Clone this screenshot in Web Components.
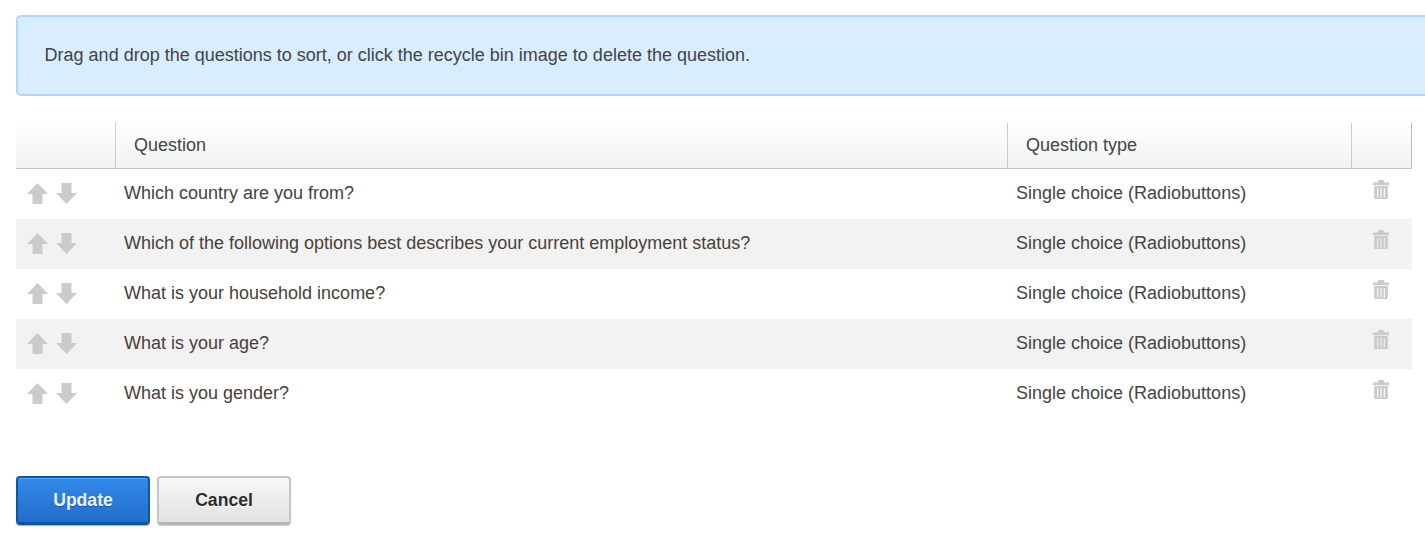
<!DOCTYPE html>
<html><head><meta charset="utf-8"><title>Sort questions</title>
<style>
html,body{margin:0;padding:0;background:#fff;overflow:hidden;height:553px}
body{font-family:"Liberation Sans",Arial,sans-serif;color:#444}
</style></head><body>
<template id="t-page"><style>
:host{display:block;padding:15px 0 0 16px;width:1396px}
.acts{display:flex;gap:7px;margin-top:57px}
</style>
<slot name="alert"></slot><slot name="table"></slot><div class="acts"><slot name="actions"></slot></div></template>
<template id="t-alert"><style>
:host{display:flex;align-items:center;box-sizing:border-box;width:1440px;height:81px;padding:0 26.6px 1px;background:#d8edff;border:2px solid #aed8ff;border-radius:5px;font-size:18px;color:#444}
</style><slot></slot></template>
<template id="t-table"><style>
:host{display:block;margin-top:27px}
</style><slot></slot></template>
<template id="t-head"><style>
:host{display:grid;grid-template-columns:99px 892px 344px 61px;height:46px;box-sizing:border-box;border-bottom:1px solid #c4c4c4;background:linear-gradient(#fff,#f1f2f2);font-size:18px}
div{box-sizing:border-box;border-left:1px solid #ccc;padding:0 18px;display:flex;align-items:center;height:45px}
div.first{border-left:0}
div.last{border-right:1px solid #bbb}
</style><div class="first"></div><div><slot name="q"></slot></div><div><slot name="t"></slot></div><div class="last"></div></template>
<template id="t-row"><style>
:host{display:grid;grid-template-columns:100px 892px 344px 60px;height:50px;align-items:center;font-size:18px;background:#fff;color:#4a4038}
:host([alt]){background:#f2f2f2}
.mv{display:flex;gap:8px;padding:0 0 1px 10.5px;align-items:center;height:100%;box-sizing:border-box}
.q{padding-left:8px;margin-top:-2px}
.t{padding-left:8px;color:#444;margin-top:-2px}
.d{display:flex;justify-content:flex-start;padding-left:21px;margin-top:-9px}
svg{display:block;fill:#cbcbcb;filter:blur(.45px)}
</style>
<div class="mv"><svg width="21" height="21" viewBox="0 0 21 21"><path d="M10.5 0 L21 11 H15.5 V21 H5.5 V11 H0Z"/></svg><svg width="21" height="21" viewBox="0 0 21 21"><path d="M5.5 0 H15.5 V10 H21 L10.5 21 L0 10 H5.5Z"/></svg></div>
<div class="q"><slot name="q"></slot></div><div class="t"><slot name="t"></slot></div>
<div class="d"><svg width="16" height="19" viewBox="0 0 16 19"><path fill-rule="evenodd" d="M5.5 0 H10.5 L11.5 2.5 H16 V5.2 H0 V2.5 H4.5Z M1.2 6 H14.8 V17.5 Q14.8 19 13.3 19 H2.7 Q1.2 19 1.2 17.5Z M4.2 8 V17.5 H5.2 V8Z M7.5 8 V17.5 H8.5 V8Z M10.8 8 V17.5 H11.8 V8Z"/></svg></div></template>
<template id="t-btn"><style>
:host{display:flex;align-items:center;justify-content:center;box-sizing:border-box;width:134px;height:49px;border-radius:4px;font-size:17.6px;font-weight:700}
:host([kind=primary]){color:#eaf4ff;background:linear-gradient(#3389e8,#226dcc);border:2px solid #0f55a0;border-bottom:3px solid #12549c;box-shadow:0 1px 1px #aaa,inset 0 1px 0 rgba(255,255,255,.25);text-shadow:0 1px 1px rgba(0,50,120,.4)}
:host([kind=default]){color:#2c2c2c;background:linear-gradient(#f7f7f7,#e2e2e2);border:2px solid #c6c6c6;border-bottom:3px solid #b5b5b5;box-shadow:0 1px 1px #ccc;text-shadow:0 1px 0 #fff}
</style><slot></slot></template>
<script>
function def(n,t){customElements.define(n,class extends HTMLElement{constructor(){super();this.attachShadow({mode:"open"}).appendChild(document.getElementById(t).content.cloneNode(true));}});}
def("x-page","t-page");def("x-alert","t-alert");def("x-table","t-table");def("x-head","t-head");def("x-row","t-row");def("x-btn","t-btn");
</script>
<x-page>
<x-alert slot="alert">Drag and drop the questions to sort, or click the recycle bin image to delete the question.</x-alert>
<x-table slot="table">
<x-head><span slot="q">Question</span><span slot="t">Question type</span></x-head>
<x-row><span slot="q">Which country are you from?</span><span slot="t">Single choice (Radiobuttons)</span></x-row>
<x-row alt><span slot="q">Which of the following options best describes your current employment status?</span><span slot="t">Single choice (Radiobuttons)</span></x-row>
<x-row><span slot="q">What is your household income?</span><span slot="t">Single choice (Radiobuttons)</span></x-row>
<x-row alt><span slot="q">What is your age?</span><span slot="t">Single choice (Radiobuttons)</span></x-row>
<x-row><span slot="q">What is you gender?</span><span slot="t">Single choice (Radiobuttons)</span></x-row>
</x-table>
<x-btn slot="actions" kind="primary">Update</x-btn><x-btn slot="actions" kind="default">Cancel</x-btn>
</x-page>
</body></html>
